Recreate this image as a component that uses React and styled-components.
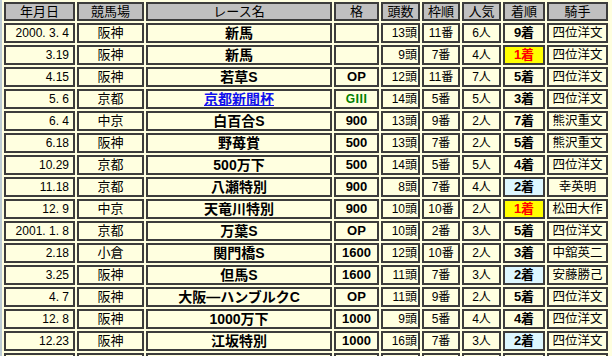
import React from 'react';
import styled, { createGlobalStyle } from 'styled-components';

const GlobalStyle = createGlobalStyle`
  body {
    margin: 0;
    background: #ffffe0;
    font-family: "Liberation Sans", "Noto Sans CJK JP", sans-serif;
    color: #000;
  }
`;

const COLUMNS = [
  { label: '年月日', width: 71 },
  { label: '競馬場', width: 67 },
  { label: 'レース名', width: 186 },
  { label: '格', width: 45 },
  { label: '頭数', width: 39 },
  { label: '枠順', width: 38 },
  { label: '人気', width: 39 },
  { label: '着順', width: 42 },
  { label: '騎手', width: 61 },
];

const RACES = [
  ['2000. 3. 4', '阪神', '新馬', '', '13頭', '11番', '6人', 9, '四位洋文'],
  ['3.19', '阪神', '新馬', '', '9頭', '7番', '4人', 1, '四位洋文'],
  ['4.15', '阪神', '若草S', 'OP', '12頭', '11番', '7人', 5, '四位洋文'],
  ['5. 6', '京都', '京都新聞杯', 'GⅢ', '14頭', '5番', '5人', 3, '四位洋文', true],
  ['6. 4', '中京', '白百合S', '900', '13頭', '9番', '2人', 7, '熊沢重文'],
  ['6.18', '阪神', '野苺賞', '500', '13頭', '7番', '2人', 5, '熊沢重文'],
  ['10.29', '京都', '500万下', '500', '14頭', '5番', '5人', 4, '四位洋文'],
  ['11.18', '京都', '八瀬特別', '900', '8頭', '7番', '4人', 2, '幸英明'],
  ['12. 9', '中京', '天竜川特別', '900', '10頭', '10番', '2人', 1, '松田大作'],
  ['2001. 1. 8', '京都', '万葉S', 'OP', '10頭', '2番', '3人', 5, '四位洋文'],
  ['2.18', '小倉', '関門橋S', '1600', '12頭', '10番', '2人', 3, '中舘英二'],
  ['3.25', '阪神', '但馬S', '1600', '11頭', '7番', '3人', 2, '安藤勝己'],
  ['4. 7', '阪神', '大阪―ハンブルクC', 'OP', '11頭', '9番', '2人', 5, '四位洋文'],
  ['12. 8', '阪神', '1000万下', '1000', '9頭', '5番', '4人', 4, '四位洋文'],
  ['12.23', '阪神', '江坂特別', '1000', '16頭', '7番', '3人', 2, '四位洋文'],
];

const Table = styled.table`
  width: 610px;
  table-layout: fixed;
  border-collapse: separate;
  border-spacing: 2px;
  border-left: 2px solid #bccbd4;
  background: #ffffe0;
`;

const HeadCell = styled.th`
  box-sizing: border-box;
  width: ${({ $width }) => $width}px;
  height: 19px;
  padding: 0;
  border: 2px solid #3c3c3c;
  background: #c0c0c0;
  font-size: 13px;
  font-weight: normal;
  line-height: 15px;
  text-align: center;
  white-space: nowrap;
`;

const Cell = styled.td`
  box-sizing: border-box;
  height: 20px;
  padding: 0 ${({ $pad }) => $pad || 0}px;
  border: 2px solid #3c3c3c;
  background: ${({ $bg }) => $bg || '#ffffe0'};
  color: ${({ $color }) => $color || '#000'};
  font-size: ${({ $size }) => $size || 13}px;
  font-weight: ${({ $bold }) => ($bold ? 'bold' : 'normal')};
  line-height: 16px;
  text-align: ${({ $align }) => $align || 'center'};
  white-space: nowrap;
  overflow: hidden;
`;

const RaceLink = styled.a`
  color: #1010ee;
  text-decoration: underline;
`;

const placeStyle = (place) => {
  if (place === 1) return { $bg: '#ffff00', $color: '#ff0000' };
  if (place === 2) return { $bg: '#ddf7ff' };
  return {};
};

const App = () => (
  <>
    <GlobalStyle />
    <Table>
      <thead>
        <tr>
          {COLUMNS.map(({ label, width }) => (
            <HeadCell key={label} $width={width}>
              {label}
            </HeadCell>
          ))}
        </tr>
      </thead>
      <tbody>
        {RACES.map((race) => {
          const [date, course, name, grade, runners, gate, pop, place, jockey, linked] = race;
          return (
            <tr key={date}>
              <Cell $align="right" $pad={4} $size={12}>{date}</Cell>
              <Cell>{course}</Cell>
              <Cell $bold $size={14}>
                {linked ? <RaceLink href="#">{name}</RaceLink> : name}
              </Cell>
              <Cell $bold $size={grade === 'GⅢ' ? 12 : 13} $color={grade === 'GⅢ' ? '#008000' : '#000'}>
                {grade}
              </Cell>
              <Cell $align="right" $pad={1} $size={12}>{runners}</Cell>
              <Cell $size={12}>{gate}</Cell>
              <Cell $size={12}>{pop}</Cell>
              <Cell $bold $size={13} {...placeStyle(place)}>
                {place}着
              </Cell>
              <Cell $size={12.5}>{jockey}</Cell>
            </tr>
          );
        })}
        <tr>
          {COLUMNS.map(({ label }) => (
            <Cell key={label} />
          ))}
        </tr>
      </tbody>
    </Table>
  </>
);

export default App;
